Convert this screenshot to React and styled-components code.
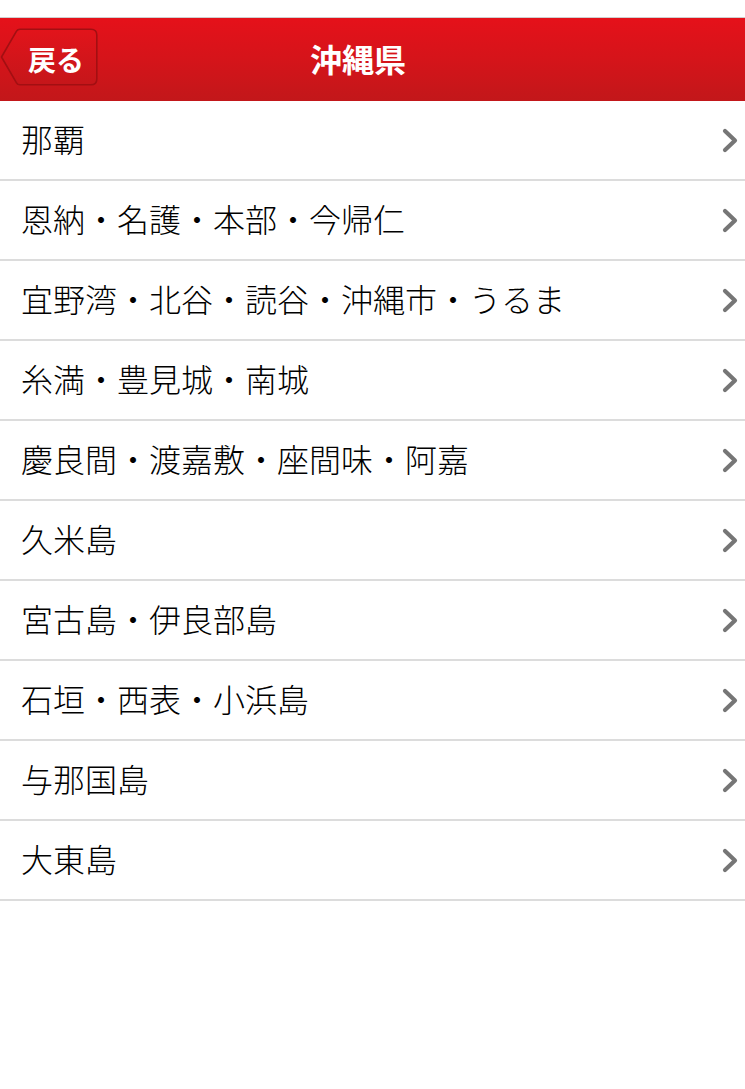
import React from "react";
import styled, { createGlobalStyle } from "styled-components";

const GlobalStyle = createGlobalStyle`
  html, body {
    margin: 0;
    padding: 0;
    background: #ffffff;
    font-family: "Noto Sans CJK JP", "Noto Sans", sans-serif;
  }
  * { box-sizing: border-box; }
`;

const Page = styled.div`
  width: 745px;
  min-height: 1089px;
  padding-top: 17px;
  background: #ffffff;
`;

const Header = styled.header`
  height: 84px;
  border-top: 1px solid #cfcfcf;
  background: linear-gradient(to bottom, #e5111a 0%, #d5141a 50%, #c2171a 100%);
  display: grid;
  grid-template-columns: 1fr auto 1fr;
  align-items: center;
`;

const BackButton = styled.button`
  position: relative;
  justify-self: start;
  width: 98px;
  height: 58px;
  margin: 0 0 6px 0;
  padding: 0 0 0 14px;
  border: none;
  background: transparent;
  color: #ffffff;
  font-family: "Noto Sans CJK JP", sans-serif;
  font-weight: 700;
  font-size: 28px;
  line-height: 58px;
  cursor: pointer;
`;

const ButtonShape = styled.svg`
  position: absolute;
  left: 0;
  top: 0;
  width: 98px;
  height: 58px;
`;

const ButtonLabel = styled.span`
  position: relative;
  display: inline-block;
  transform: translateY(2px);
  letter-spacing: 0;
`;

const Title = styled.h1`
  margin: 0 29px 4px 0;
  color: #ffffff;
  font-size: 32px;
  font-weight: 700;
  line-height: 1;
  white-space: nowrap;
`;

const List = styled.ul`
  list-style: none;
  margin: 0;
  padding: 0;
`;

const Row = styled.li`
  height: 80px;
  border-bottom: 2px solid #dcdcdc;
  display: flex;
  align-items: center;
  justify-content: space-between;
  padding: 0 7px 0 21px;
  color: #000000;
  font-size: 32px;
  font-weight: 300;
  cursor: pointer;
`;

const RowLabel = styled.span`
  line-height: 1;
  white-space: nowrap;
  transform: translateY(-2px);
`;

const Chevron = styled.svg`
  width: 16px;
  height: 25px;
  flex: none;
`;

const areas = [
  "那覇",
  "恩納・名護・本部・今帰仁",
  "宜野湾・北谷・読谷・沖縄市・うるま",
  "糸満・豊見城・南城",
  "慶良間・渡嘉敷・座間味・阿嘉",
  "久米島",
  "宮古島・伊良部島",
  "石垣・西表・小浜島",
  "与那国島",
  "大東島",
];

export default function App() {
  return (
    <Page>
      <GlobalStyle />
      <Header>
        <BackButton>
          <ButtonShape viewBox="0 0 98 58">
            <defs>
              <linearGradient id="btnGrad" x1="0" y1="0" x2="0" y2="1">
                <stop offset="0" stopColor="#e2141b" />
                <stop offset="1" stopColor="#c5161a" />
              </linearGradient>
            </defs>
            <path
              d="M1.5 29 L16.5 3.2 Q17.5 1.2 20 1.2 L91 1.2 Q96.8 1.2 96.8 7 L96.8 51 Q96.8 56.8 91 56.8 L20 56.8 Q17.5 56.8 16.5 54.8 Z"
              fill="url(#btnGrad)"
              stroke="#a30f12"
              strokeWidth="1.6"
              strokeLinejoin="round"
            />
          </ButtonShape>
          <ButtonLabel>戻る</ButtonLabel>
        </BackButton>
        <Title>沖縄県</Title>
        <div />
      </Header>
      <List>
        {areas.map((name) => (
          <Row key={name}>
            <RowLabel>{name}</RowLabel>
            <Chevron viewBox="0 0 16 25">
              <polyline
                points="3,3 13,12.5 3,22"
                fill="none"
                stroke="#767676"
                strokeWidth="4.2"
                strokeLinecap="round"
                strokeLinejoin="round"
              />
            </Chevron>
          </Row>
        ))}
      </List>
    </Page>
  );
}
